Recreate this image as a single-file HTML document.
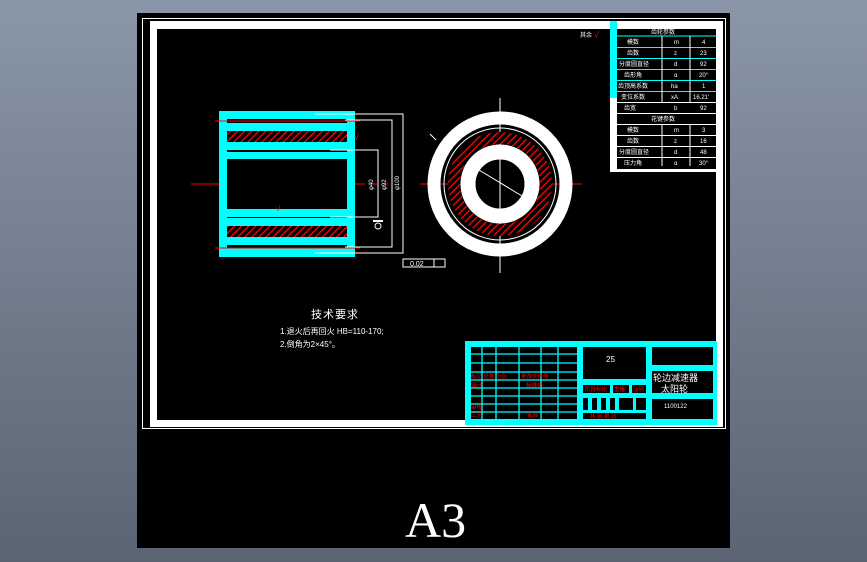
<!DOCTYPE html>
<html><head><meta charset="utf-8"><style>
html,body{margin:0;padding:0;width:867px;height:562px;overflow:hidden;background:linear-gradient(#8a97a8,#5b6472);}
svg{position:absolute;left:0;top:0}
text{font-family:"Liberation Sans","Noto Sans CJK SC",sans-serif;}
</style></head><body>
<svg width="867" height="562" viewBox="0 0 867 562">
<defs>
<pattern id="h" width="5" height="5" patternUnits="userSpaceOnUse" patternTransform="rotate(45)">
<rect width="5" height="5" fill="#000"/><rect width="1.4" height="5" fill="#f00"/></pattern>
</defs>
<rect x="137" y="13" width="593" height="535" fill="#000"/>
<rect x="142.5" y="18.5" width="583" height="410" fill="none" stroke="#fff" stroke-width="1"/>
<rect x="150" y="21" width="573" height="406" fill="#fff"/>
<rect x="157" y="29" width="559" height="391" fill="#000"/>

<!-- center lines -->
<line x1="191" y1="184" x2="388" y2="184" stroke="#f00" stroke-width="1" stroke-dasharray="30,6,6,6"/>
<line x1="420" y1="184" x2="582" y2="184" stroke="#f00" stroke-width="1"/>
<line x1="500" y1="98" x2="500" y2="273" stroke="#fff" stroke-width="1"/>

<!-- left part -->
<rect x="219" y="111" width="136" height="146" fill="#0ff"/>
<rect x="227" y="119" width="120" height="4" fill="#000"/>
<rect x="227" y="131" width="120" height="11" fill="url(#h)"/>
<rect x="227" y="150" width="120" height="2" fill="#000"/>
<rect x="227" y="159" width="120" height="50" fill="#000"/>
<rect x="227" y="217" width="120" height="1" fill="#000"/>
<rect x="227" y="226" width="120" height="11" fill="url(#h)"/>
<rect x="227" y="245" width="120" height="3" fill="#000"/>
<line x1="215" y1="121" x2="360" y2="121" stroke="#f00"/>
<line x1="215" y1="248" x2="360" y2="248" stroke="#f00"/>
<!-- dims -->
<g stroke="#fff" stroke-width="1" fill="none">
<polyline points="315,114 403,114 403,253 315,253"/>
<polyline points="345,120 392,120 392,247 345,247"/>
<polyline points="330,150 378,150 378,217 330,217"/>
<rect x="403" y="259" width="42" height="8"/>
<line x1="434" y1="259" x2="434" y2="267"/>
</g>
<text x="410" y="266" fill="#fff" font-size="7">0.02</text>
<text x="399" y="190" fill="#fff" font-size="6" transform="rotate(-90 399 190)">φ100</text>
<text x="386" y="190" fill="#fff" font-size="6" transform="rotate(-90 386 190)">φ92</text>
<text x="373" y="190" fill="#fff" font-size="6" transform="rotate(-90 373 190)">φ40</text>
<text x="354" y="140" fill="#f00" font-size="9">√</text>
<text x="276" y="211" fill="#f00" font-size="8">√</text>
<rect x="373" y="220" width="10" height="2" fill="#fff"/>
<circle cx="378" cy="226" r="3" fill="none" stroke="#fff"/>

<!-- circle view -->
<circle cx="500" cy="184" r="66" fill="none" stroke="#fff" stroke-width="13"/>
<circle cx="500" cy="184" r="56" fill="none" stroke="#fff" stroke-width="1"/>
<circle cx="500" cy="184" r="46" fill="none" stroke="url(#h)" stroke-width="12"/>
<circle cx="500" cy="184" r="32" fill="none" stroke="#fff" stroke-width="15"/>
<circle cx="500" cy="184" r="24" fill="#000"/>
<line x1="479" y1="170" x2="522" y2="196" stroke="#fff"/>
<line x1="500" y1="160" x2="500" y2="208" stroke="#fff"/>
<line x1="430" y1="134" x2="436" y2="140" stroke="#fff"/>

<!-- params table -->
<rect x="610" y="21" width="107" height="151" fill="#fff"/>
<rect x="610" y="21" width="7" height="77" fill="#0ff"/>
<rect x="617" y="29" width="99" height="140" fill="#000"/>
<g stroke="#0ff" stroke-width="1">
<line x1="617" y1="36" x2="716" y2="36"/><line x1="617" y1="47.5" x2="716" y2="47.5"/>
<line x1="617" y1="58.5" x2="716" y2="58.5"/><line x1="617" y1="69.5" x2="716" y2="69.5"/>
<line x1="617" y1="80.5" x2="716" y2="80.5"/><line x1="617" y1="91.5" x2="716" y2="91.5"/>
</g>
<g stroke="#fff" stroke-width="1">
<line x1="617" y1="102.5" x2="716" y2="102.5"/><line x1="617" y1="113.5" x2="716" y2="113.5"/>
<line x1="617" y1="124.5" x2="716" y2="124.5"/><line x1="617" y1="135.5" x2="716" y2="135.5"/>
<line x1="617" y1="146.5" x2="716" y2="146.5"/><line x1="617" y1="157.5" x2="716" y2="157.5"/>
<line x1="662" y1="36" x2="662" y2="102"/><line x1="690" y1="36" x2="690" y2="102"/>
<line x1="662" y1="124" x2="662" y2="166"/><line x1="690" y1="124" x2="690" y2="166"/>
</g>
<g fill="#fff" font-size="6">
<text x="651" y="34">齿轮参数</text><text x="627" y="44">模数</text><text x="674" y="44">m</text><text x="702" y="44">4</text>
<text x="627" y="55">齿数</text><text x="674" y="55">z</text><text x="700" y="55">23</text>
<text x="619" y="66">分度圆直径</text><text x="674" y="66">d</text><text x="700" y="66">92</text>
<text x="624" y="77">齿形角</text><text x="674" y="77">α</text><text x="699" y="77">20°</text>
<text x="618" y="88">齿顶高系数</text><text x="671" y="88">ha</text><text x="702" y="88">1</text>
<text x="621" y="99">变位系数</text><text x="671" y="99">xA</text><text x="693" y="99">16.21'</text>
<text x="624" y="110">齿宽</text><text x="674" y="110">b</text><text x="700" y="110">92</text>
<text x="651" y="121">花键参数</text><text x="627" y="132">模数</text><text x="674" y="132">m</text><text x="702" y="132">3</text>
<text x="627" y="143">齿数</text><text x="674" y="143">z</text><text x="700" y="143">16</text>
<text x="619" y="154">分度圆直径</text><text x="674" y="154">d</text><text x="700" y="154">48</text>
<text x="624" y="165">压力角</text><text x="674" y="165">α</text><text x="699" y="165">30°</text>
<text x="580" y="37">其余</text></g>
<text x="594" y="38" fill="#f00" font-size="9">√</text>

<!-- tech requirements -->
<g fill="#fff">
<text x="311" y="318" font-size="11" letter-spacing="1">技术要求</text>
<text x="280" y="334" font-size="8">1.退火后再回火 HB=110-170;</text>
<text x="280" y="347" font-size="8">2.倒角为2×45°。</text>
</g>

<!-- title block -->
<rect x="465" y="341" width="252" height="84" fill="#0ff"/>
<rect x="717" y="341" width="6" height="84" fill="#fff"/>
<g fill="#000">
<rect x="583" y="347" width="63" height="32"/>
<rect x="652" y="347" width="61" height="18"/>
<rect x="652" y="371" width="61" height="22"/>
<rect x="652" y="399" width="61" height="20"/>
<rect x="583" y="385" width="27" height="8"/><rect x="613" y="385" width="16" height="8"/><rect x="632" y="385" width="14" height="8"/>
<rect x="583" y="398" width="5" height="12"/><rect x="592" y="398" width="5" height="12"/><rect x="601" y="398" width="5" height="12"/><rect x="610" y="398" width="5" height="12"/><rect x="619" y="398" width="14" height="12"/><rect x="636" y="398" width="10" height="12"/>
<rect x="583" y="413" width="63" height="6"/>
</g>
<g fill="#000">
<rect x="471" y="347" width="106" height="72"/>
</g>
<g stroke="#0ff" stroke-width="1.3">
<line x1="471" y1="354" x2="577" y2="354"/><line x1="471" y1="363" x2="577" y2="363"/>
<line x1="471" y1="372" x2="577" y2="372"/><line x1="471" y1="380" x2="577" y2="380"/>
<line x1="471" y1="388" x2="577" y2="388"/><line x1="471" y1="396" x2="577" y2="396"/>
<line x1="471" y1="404" x2="577" y2="404"/><line x1="471" y1="412" x2="577" y2="412"/>
<line x1="482" y1="347" x2="482" y2="419"/><line x1="496" y1="347" x2="496" y2="419"/>
<line x1="519" y1="347" x2="519" y2="419"/><line x1="541" y1="347" x2="541" y2="419"/>
<line x1="558" y1="347" x2="558" y2="419"/>
</g>
<g fill="#f00" font-size="5.5">
<text x="471" y="378">标记 处数 分区</text><text x="521" y="378">更改文件号</text>
<text x="471" y="387">设计</text><text x="526" y="387">标准化</text>
<text x="471" y="409">审核</text><text x="471" y="417">工艺</text><text x="527" y="417">批准</text>
<text x="585" y="391">阶段标记</text><text x="614" y="391">重量</text><text x="633" y="391">比例</text>
<text x="590" y="418">共  张  第  张</text>
</g>
<g fill="#fff">
<text x="606" y="362" font-size="8">25</text>
<text x="653" y="381" font-size="9">轮边减速器</text>
<text x="661" y="392" font-size="9">太阳轮</text>
<text x="664" y="408" font-size="6">1100122</text>
</g>

<text x="405" y="537" fill="#fff" font-size="50" font-family="Liberation Serif, serif" style="font-family:'Liberation Serif',serif">A3</text>
</svg>
</body></html>
